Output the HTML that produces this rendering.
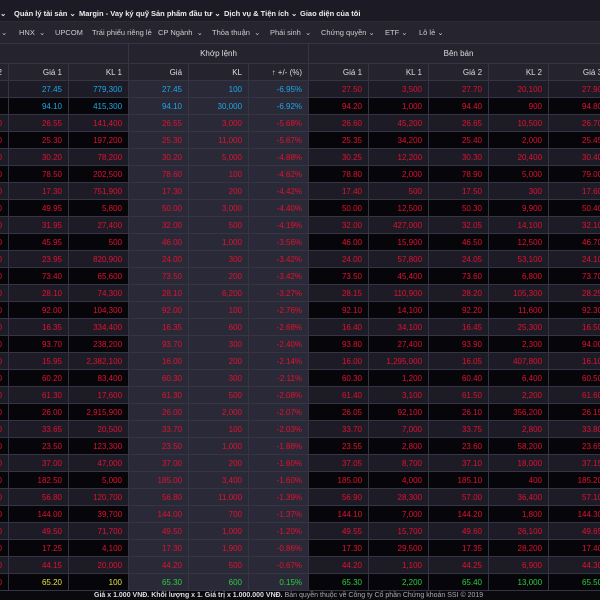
<!DOCTYPE html>
<html><head><meta charset="utf-8">
<style>
*{margin:0;padding:0;box-sizing:border-box}
body{width:600px;height:600px;overflow:hidden;background:#0a090e;font-family:"Liberation Sans",Arial,sans-serif;position:relative}
.n1{position:absolute;left:0;top:0;width:600px;height:22px;background:#1c1b25;border-bottom:1px solid #2c2b36}
.n2{position:absolute;left:0;top:22px;width:600px;height:21px;background:#26252f}
.n1 span{position:absolute;top:9px;font-size:7.5px;font-weight:bold;color:#eee;white-space:nowrap}
.n2 span{position:absolute;font-size:7.5px;color:#ccc;white-space:nowrap}
.c{color:#888;font-size:7px}
table{position:absolute;left:-52px;top:43px;border-collapse:collapse;table-layout:fixed;width:660px}
td{height:17px;border:1px solid #363544;text-align:right;padding-right:6px;font-size:8px;color:#e3122f;white-space:nowrap;overflow:hidden}
tr.g td{height:20px;background:#24232e;color:#ddd;text-align:center;padding:0}
tr.h td{background:#24232e;color:#ddd;height:17px}
tr.o td{background:#1c1b26}
tr.e td{background:#060509}
tr td.k{background:#2a2937 !important}
.b{color:#1ea8e6}.y{color:#e6e040}.gr{color:#2ccf3c}
.f{position:absolute;left:0;top:591px;width:600px;height:9px;background:#0a090e;font-size:7px;font-weight:bold;color:#ddd;padding-left:94px;white-space:nowrap;line-height:9px}
</style></head><body>
<div class="n1">
<span style="left:0" class="c">⌄</span>
<span style="left:14px">Quản lý tài sản <span class="c" style="position:static">⌄</span></span>
<span style="left:79px">Margin - Vay ký quỹ</span>
<span style="left:151px">Sản phẩm đầu tư <span class="c" style="position:static">⌄</span></span>
<span style="left:224px">Dịch vụ &amp; Tiện ích <span class="c" style="position:static">⌄</span></span>
<span style="left:300px">Giao diện của tôi</span>
</div>
<div class="n2">
<span style="left:1px;top:6px" class="c">⌄</span>
<span style="left:19px;top:6px">HNX &nbsp;⌄</span>
<span style="left:55px;top:6px">UPCOM</span>
<span style="left:92px;top:6px">Trái phiếu riêng lẻ</span>
<span style="left:158px;top:6px">CP Ngành &nbsp;⌄</span>
<span style="left:212px;top:6px">Thỏa thuận &nbsp;⌄</span>
<span style="left:270px;top:6px">Phái sinh &nbsp;⌄</span>
<span style="left:321px;top:6px">Chứng quyền ⌄</span>
<span style="left:385px;top:6px">ETF ⌄</span>
<span style="left:419px;top:6px">Lô lẻ ⌄</span>
</div>
<table id="t">
<colgroup><col style="width:60px"><col style="width:60px"><col style="width:60px"><col style="width:60px"><col style="width:60px"><col style="width:60px"><col style="width:60px"><col style="width:60px"><col style="width:60px"><col style="width:60px"><col style="width:60px"></colgroup>
<tr class="g"><td colspan="3"></td><td colspan="3">Khớp lệnh</td><td colspan="5">Bên bán</td></tr>
<tr class="h"><td>2</td><td>Giá 1</td><td>KL 1</td><td>Giá</td><td>KL</td><td>↑ +/- (%)</td><td>Giá 1</td><td>KL 1</td><td>Giá 2</td><td>KL 2</td><td>Giá 3</td></tr>
</table>
<div class="f">Giá x 1.000 VNĐ. Khối lượng x 1. Giá trị x 1.000.000 VNĐ. <span style="font-weight:normal;color:#aaa">Bản quyền thuộc về Công ty Cổ phần Chứng khoán SSI © 2019</span></div>
<script>
var d=[
["27.45","779,300","27.45","100","-6.95%","27.50","3,500","27.70","20,100","27.90"],
["94.10","415,300","94.10","30,000","-6.92%","94.20","1,000","94.40","900","94.80"],
["26.55","141,400","26.55","3,000","-5.68%","26.60","45,200","26.65","10,500","26.70"],
["25.30","197,200","25.30","11,000","-5.67%","25.35","34,200","25.40","2,000","25.45"],
["30.20","78,200","30.20","5,000","-4.88%","30.25","12,200","30.30","20,400","30.40"],
["78.50","202,500","78.60","100","-4.62%","78.80","2,000","78.90","5,000","79.00"],
["17.30","751,900","17.30","200","-4.42%","17.40","500","17.50","300","17.60"],
["49.95","5,800","50.00","3,000","-4.40%","50.00","12,500","50.30","9,900","50.40"],
["31.95","27,400","32.00","500","-4.19%","32.00","427,000","32.05","14,100","32.10"],
["45.95","500","46.00","1,000","-3.56%","46.00","15,900","46.50","12,500","46.70"],
["23.95","820,900","24.00","300","-3.42%","24.00","57,800","24.05","53,100","24.10"],
["73.40","65,600","73.50","200","-3.42%","73.50","45,400","73.60","6,800","73.70"],
["28.10","74,300","28.10","6,200","-3.27%","28.15","110,900","28.20","105,300","28.25"],
["92.00","104,300","92.00","100","-2.76%","92.10","14,100","92.20","11,600","92.30"],
["16.35","334,400","16.35","600","-2.68%","16.40","34,100","16.45","25,300","16.50"],
["93.70","238,200","93.70","300","-2.40%","93.80","27,400","93.90","2,300","94.00"],
["15.95","2,382,100","16.00","200","-2.14%","16.00","1,295,000","16.05","407,800","16.10"],
["60.20","83,400","60.30","300","-2.11%","60.30","1,200","60.40","6,400","60.50"],
["61.30","17,600","61.30","500","-2.08%","61.40","3,100","61.50","2,200","61.60"],
["26.00","2,915,900","26.00","2,000","-2.07%","26.05","92,100","26.10","356,200","26.15"],
["33.65","20,500","33.70","100","-2.03%","33.70","7,000","33.75","2,800","33.80"],
["23.50","123,300","23.50","1,000","-1.88%","23.55","2,800","23.60","58,200","23.65"],
["37.00","47,000","37.00","200","-1.60%","37.05","8,700","37.10","18,000","37.15"],
["182.50","5,000","185.00","3,400","-1.60%","185.00","4,000","185.10","400","185.20"],
["56.80","120,700","56.80","11,000","-1.39%","56.90","28,300","57.00","36,400","57.10"],
["144.00","39,700","144.00","700","-1.37%","144.10","7,000","144.20","1,800","144.30"],
["49.50","71,700","49.50","1,000","-1.20%","49.55","15,700","49.60","26,100","49.65"],
["17.25","4,100","17.30","1,900","-0.86%","17.30","29,500","17.35","28,200","17.40"],
["44.15","20,000","44.20","500","-0.67%","44.20","1,100","44.25","6,900","44.30"],
["65.20","100","65.30","600","0.15%","65.30","2,200","65.40","13,000","65.50"]];
var h="";
d.forEach(function(r,i){
 var cls=i%2?"e":"o";
 h+='<tr class="'+cls+'"><td>'+(i<2?'':'0')+'</td>';
 r.forEach(function(v,j){
  var c="";
  if(i<2&&j<5)c="b";
  if(i==29)c=j<2?"y":"gr";
  if(j>=2&&j<=4)c+=" k";
  h+='<td class="'+c+'">'+v+'</td>';
 });
 h+='</tr>';
});
document.getElementById("t").insertAdjacentHTML("beforeend",h);
</script>
</body></html>
